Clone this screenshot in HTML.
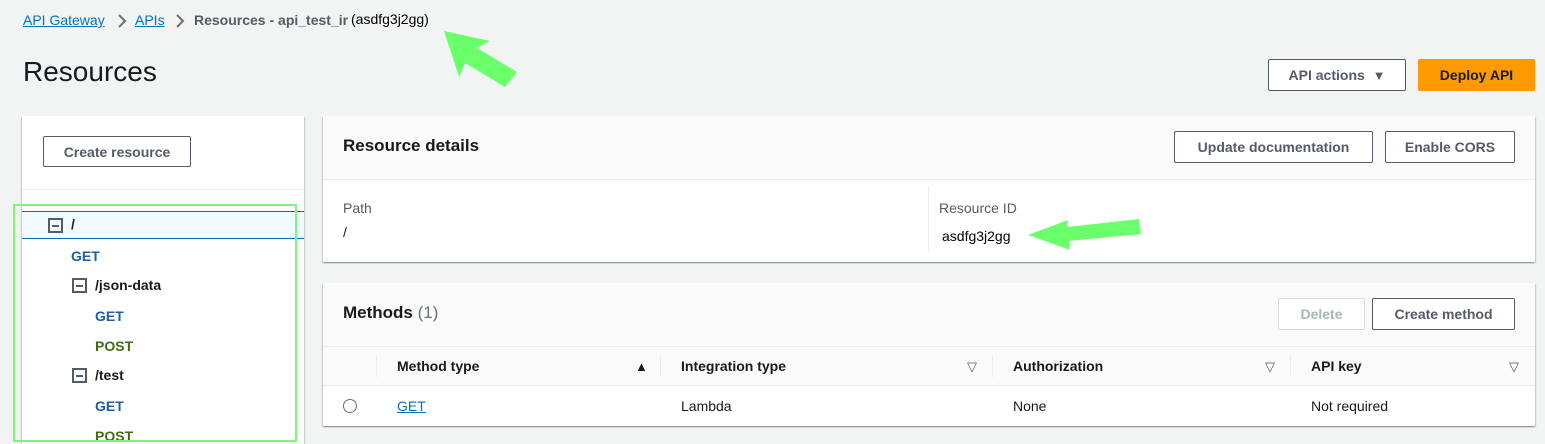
<!DOCTYPE html><html><head><style>
html,body{margin:0;width:1545px;height:444px;overflow:hidden}
body{background:#f2f3f3;font-family:"Liberation Sans",sans-serif;position:relative;color:#16191f}
.a{position:absolute}
.btn{position:absolute;border:1px solid #545b64;background:#fff;font-weight:bold;font-size:14px;color:#545b64;display:flex;align-items:center;justify-content:center;box-sizing:border-box;border-radius:2px}
.lnk{color:#0073bb;text-decoration:underline}
.panel{position:absolute;background:#fff;box-shadow:0 1px 1px rgba(0,28,36,.3),1px 1px 1px rgba(0,28,36,.15),-1px 1px 1px rgba(0,28,36,.15)}
.box{position:absolute;width:11px;height:11px;border:2px solid #545b64}
.box:after{content:"";position:absolute;left:2px;right:2px;top:4.5px;height:2px;background:#545b64}
.m{position:absolute;font-weight:bold;font-size:14px}
.g{color:#1d5ea6}.p{color:#3f6d0b}
.th{position:absolute;top:358px;font-size:14px;font-weight:bold;color:#16191f}
.sep{position:absolute;top:355px;width:1px;height:22px;background:#e9ebed}
.td{position:absolute;top:398px;font-size:14px}
</style></head><body>
<div class="a" style="left:23px;top:12px;font-size:14px"><span class="lnk">API Gateway</span></div>
<svg class="a" style="left:117px;top:13px" width="10" height="16"><path d="M2 2 L8 8 L2 14" stroke="#687078" stroke-width="2" fill="none"/></svg>
<div class="a" style="left:135px;top:12px;font-size:14px"><span class="lnk">APIs</span></div>
<svg class="a" style="left:175px;top:13px" width="10" height="16"><path d="M2 2 L8 8 L2 14" stroke="#687078" stroke-width="2" fill="none"/></svg>
<div class="a" style="left:194px;top:12px;font-size:14px;color:#545b64;font-weight:bold">Resources - api_test_ir</div>
<div class="a" style="left:351px;top:11px;font-size:14px;color:#000">(asdfg3j2gg)</div>
<div class="a" style="left:23px;top:56px;font-size:28px">Resources</div>
<div class="btn" style="left:1268px;top:59px;width:138px;height:32px">API actions&nbsp;&nbsp;<span style="font-size:13px;color:#545b64">▼</span></div>
<div class="btn" style="left:1418px;top:59px;width:117px;height:32px;background:#ff9900;border-color:#ff9900;color:#16191f">Deploy API</div>

<div class="panel" style="left:22px;top:116px;width:282px;height:340px"></div>
<div class="btn" style="left:43px;top:136px;width:148px;height:31px">Create resource</div>
<div class="a" style="left:22px;top:189px;width:282px;height:1px;background:#eaeded"></div>
<div class="a" style="left:22px;top:211px;width:282px;height:26px;background:#f1faff;border-top:1px solid #0073bb;border-bottom:1px solid #0073bb"></div>
<div class="box" style="left:48px;top:218px"></div><div class="m" style="left:71px;top:216px;color:#16191f">/</div>
<div class="m g" style="left:71px;top:248px">GET</div>
<div class="box" style="left:72px;top:278px"></div><div class="m" style="left:95px;top:277px">/json-data</div>
<div class="m g" style="left:95px;top:308px">GET</div>
<div class="m p" style="left:95px;top:338px">POST</div>
<div class="box" style="left:72px;top:368px"></div><div class="m" style="left:95px;top:367px">/test</div>
<div class="m g" style="left:95px;top:398px">GET</div>
<div class="m p" style="left:95px;top:428px">POST</div>
<div class="a" style="left:13px;top:204px;width:280px;height:234px;border:2px solid #7bf57b"></div>

<div class="panel" style="left:323px;top:116px;width:1212px;height:146px"></div>
<div class="a" style="left:323px;top:116px;width:1212px;height:63px;background:#fafafa;border-bottom:1px solid #eaeded"></div>
<div class="a" style="left:343px;top:136px;font-size:17px;font-weight:bold">Resource details</div>
<div class="btn" style="left:1174px;top:131px;width:199px;height:32px">Update documentation</div>
<div class="btn" style="left:1385px;top:131px;width:130px;height:32px">Enable CORS</div>
<div class="a" style="left:343px;top:200px;font-size:14px;color:#545b64">Path</div>
<div class="a" style="left:343px;top:224px;font-size:14px">/</div>
<div class="a" style="left:928px;top:186px;width:1px;height:66px;background:#eaeded"></div>
<div class="a" style="left:939px;top:200px;font-size:14px;color:#545b64">Resource ID</div>
<div class="a" style="left:942px;top:228px;font-size:14px;color:#000">asdfg3j2gg</div>

<div class="panel" style="left:323px;top:283px;width:1212px;height:143px"></div>
<div class="a" style="left:323px;top:283px;width:1212px;height:103px;background:#fafafa"></div>
<div class="a" style="left:323px;top:346px;width:1212px;height:1px;background:#eaeded"></div>
<div class="a" style="left:323px;top:385px;width:1212px;height:1px;background:#eaeded"></div>
<div class="a" style="left:343px;top:303px;font-size:17px;font-weight:bold">Methods <span style="font-weight:normal;color:#687078">(1)</span></div>
<div class="btn" style="left:1278px;top:298px;width:87px;height:32px;border-color:#d5dbdb;color:#aab7b8">Delete</div>
<div class="btn" style="left:1372px;top:298px;width:143px;height:32px">Create method</div>
<div class="sep" style="left:376px"></div><div class="sep" style="left:660px"></div><div class="sep" style="left:992px"></div><div class="sep" style="left:1290px"></div>
<div class="th" style="left:397px">Method type</div><div class="a" style="left:635px;top:359px;font-size:13px">▲</div>
<div class="th" style="left:681px">Integration type</div><div class="a" style="left:967px;top:359px;font-size:13px;color:#545b64">▽</div>
<div class="th" style="left:1013px">Authorization</div><div class="a" style="left:1265px;top:359px;font-size:13px;color:#545b64">▽</div>
<div class="th" style="left:1311px">API key</div><div class="a" style="left:1509px;top:359px;font-size:13px;color:#545b64">▽</div>
<div class="a" style="left:343px;top:399px;width:12px;height:12px;border:1px solid #687078;border-radius:50%"></div>
<div class="td lnk" style="left:397px">GET</div>
<div class="td" style="left:681px">Lambda</div>
<div class="td" style="left:1013px">None</div>
<div class="td" style="left:1311px">Not required</div>
<svg class="a" style="left:0;top:0" width="1545" height="444"><polygon points="444,31 490,41 477,48 517,72 505,87 465,63 459,77" fill="#6cff6c"/><polygon points="1028,235 1068,220 1067,227 1139,219 1141,234 1069,241 1070,250" fill="#6cff6c"/></svg>
</body></html>
